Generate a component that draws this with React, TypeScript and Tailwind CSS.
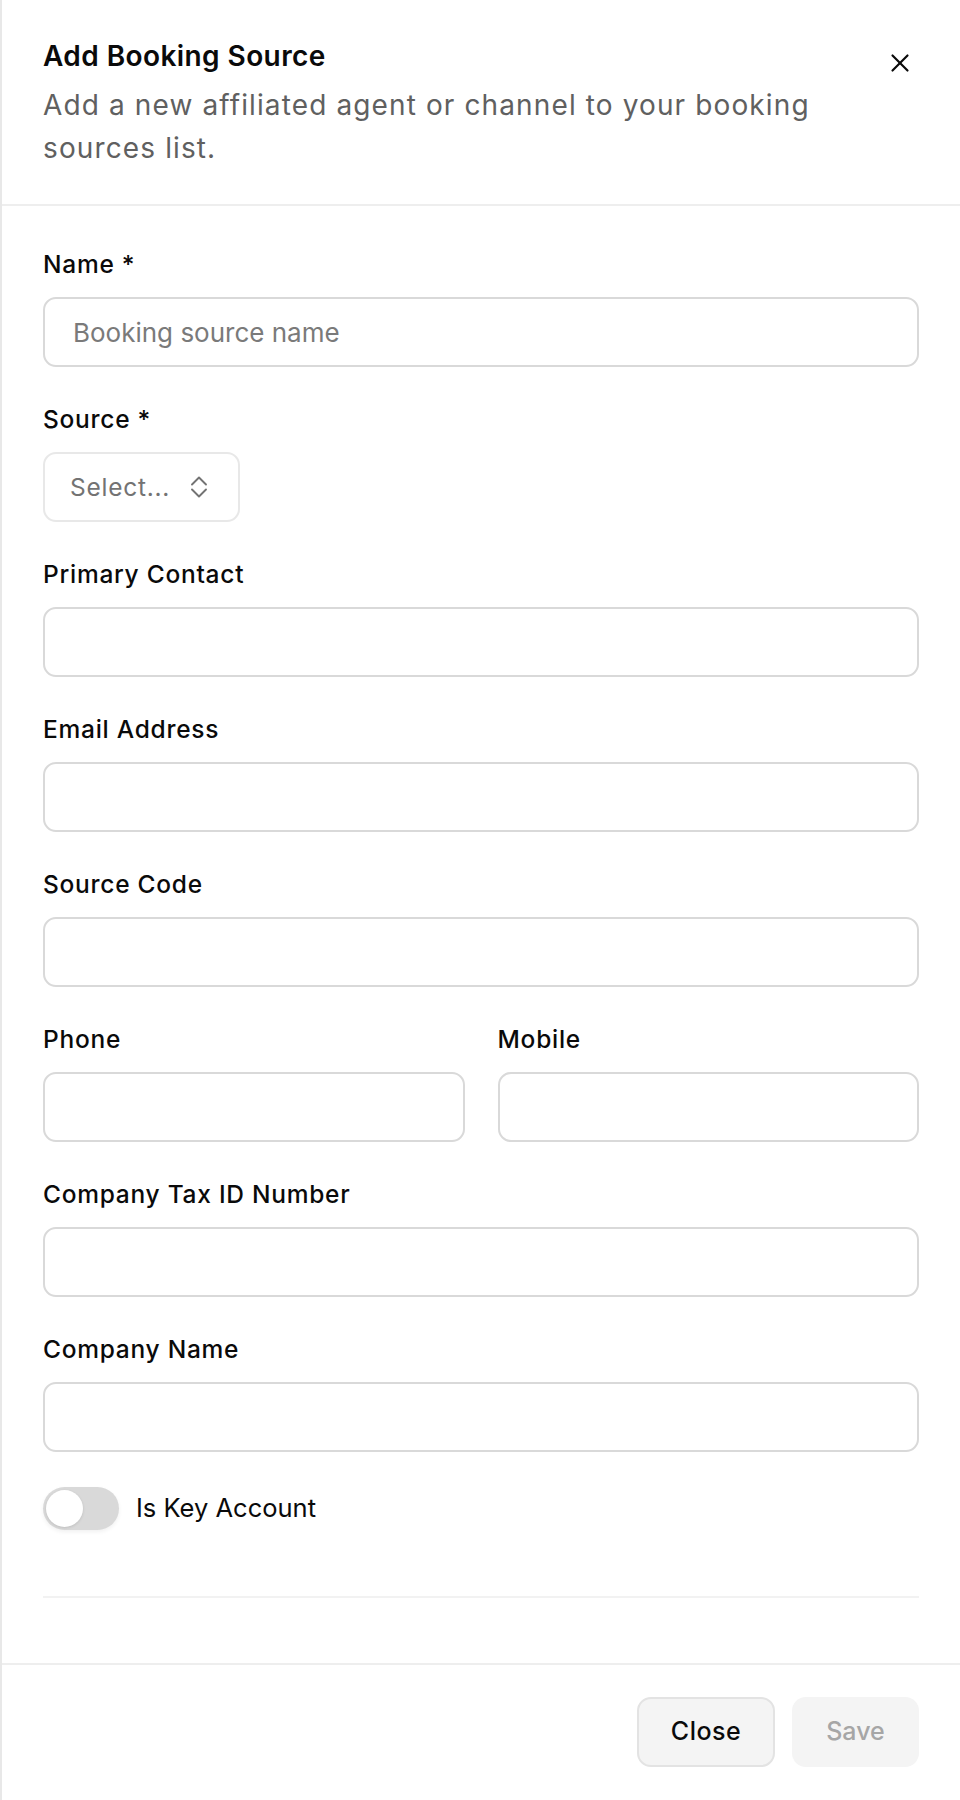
import { X } from 'lucide-react';

type Field = {
  label: string;
  placeholder?: string;
};

const topFields: Field[] = [
  { label: 'Primary Contact' },
  { label: 'Email Address' },
  { label: 'Source Code' },
];

const bottomFields: Field[] = [{ label: 'Company Tax ID Number' }, { label: 'Company Name' }];

function FieldLabel({ children }: { children: string }) {
  return (
    <label className="block text-[24.5px] leading-[35px] font-medium tracking-[0.03em] text-[#0a0a0a]">
      {children}
    </label>
  );
}

function TextInput({ placeholder }: { placeholder?: string }) {
  return (
    <input
      type="text"
      placeholder={placeholder}
      className="h-[70px] w-full rounded-[13px] border-2 border-[#d9d9d9] bg-white px-[28px] text-[26px] text-[#0a0a0a] outline-none placeholder:text-[#7a7a7a]"
    />
  );
}

function FormField({ label, placeholder }: Field) {
  return (
    <div className="flex flex-col gap-[15px]">
      <FieldLabel>{label}</FieldLabel>
      <TextInput placeholder={placeholder} />
    </div>
  );
}

function ChevronsUpDown() {
  return (
    <svg width="18" height="24" viewBox="0 0 18 24" fill="none" stroke="#737373" strokeWidth="1.9" strokeLinecap="round" strokeLinejoin="round">
      <path d="M2 9.5 9 2.5l7 7" />
      <path d="M2 14.5l7 7 7-7" />
    </svg>
  );
}

export default function App() {
  return (
    <div className="flex h-[1800px] w-[960px] flex-col border-l-2 border-[#e8e8e8] bg-white font-['Inter','Liberation_Sans',sans-serif]">
      <header className="relative border-b-2 border-[#eeeeee] px-[41px] pt-[35px] pb-[34px]">
        <h2 className="text-[28px] leading-[42px] font-semibold tracking-[0.015em] text-[#0a0a0a]">
          Add Booking Source
        </h2>
        <p className="mt-[7px] pr-[60px] text-[28px] leading-[43px] tracking-[0.04em] text-[#606060]">
          Add a new affiliated agent or channel to your booking sources list.
        </p>
        <button type="button" aria-label="Close" className="absolute top-[48px] right-[45px] text-[#0a0a0a]">
          <X size={30} strokeWidth={1.75} />
        </button>
      </header>

      <div className="flex flex-1 flex-col gap-[35px] px-[41px] pt-[41px]">
        <FormField label="Name *" placeholder="Booking source name" />

        <div className="flex flex-col gap-[15px]">
          <FieldLabel>Source *</FieldLabel>
          <button
            type="button"
            className="flex h-[70px] w-[197px] items-center justify-between rounded-[13px] border-2 border-[#e8e8e8] bg-white pr-[30px] pl-[25px]"
          >
            <span className="text-[24.5px] tracking-[0.03em] text-[#737373]">Select...</span>
            <ChevronsUpDown />
          </button>
        </div>

        {topFields.map((field) => (
          <FormField key={field.label} {...field} />
        ))}

        <div className="grid grid-cols-2 gap-[33px]">
          <FormField label="Phone" />
          <FormField label="Mobile" />
        </div>

        {bottomFields.map((field) => (
          <FormField key={field.label} {...field} />
        ))}

        <div className="flex items-center gap-[17px]">
          <button
            type="button"
            role="switch"
            aria-checked="false"
            className="flex h-[43px] w-[76px] items-center rounded-full bg-[#d9d9d9] px-[3px] shadow-[0_2px_4px_rgba(0,0,0,0.06)]"
          >
            <span className="block h-[37px] w-[37px] rounded-full bg-white shadow-[0_1px_3px_rgba(0,0,0,0.12)]" />
          </button>
          <span className="text-[25.5px] text-[#0a0a0a]">Is Key Account</span>
        </div>

        <div className="mt-[31px] h-[2px] bg-[#f2f2f2]" />
      </div>

      <footer className="flex justify-end gap-[17px] border-t-2 border-[#eeeeee] px-[41px] pt-[32px] pb-[33px]">
        <button
          type="button"
          className="h-[70px] w-[138px] rounded-[14px] border-2 border-[#e3e3e3] bg-[#f4f4f4] text-[25px] font-medium tracking-[0.02em] text-[#0a0a0a]"
        >
          Close
        </button>
        <button
          type="button"
          disabled
          className="h-[70px] w-[127px] rounded-[14px] bg-[#f4f4f4] text-[25px] font-medium text-[#a6a6a6]"
        >
          Save
        </button>
      </footer>
    </div>
  );
}
